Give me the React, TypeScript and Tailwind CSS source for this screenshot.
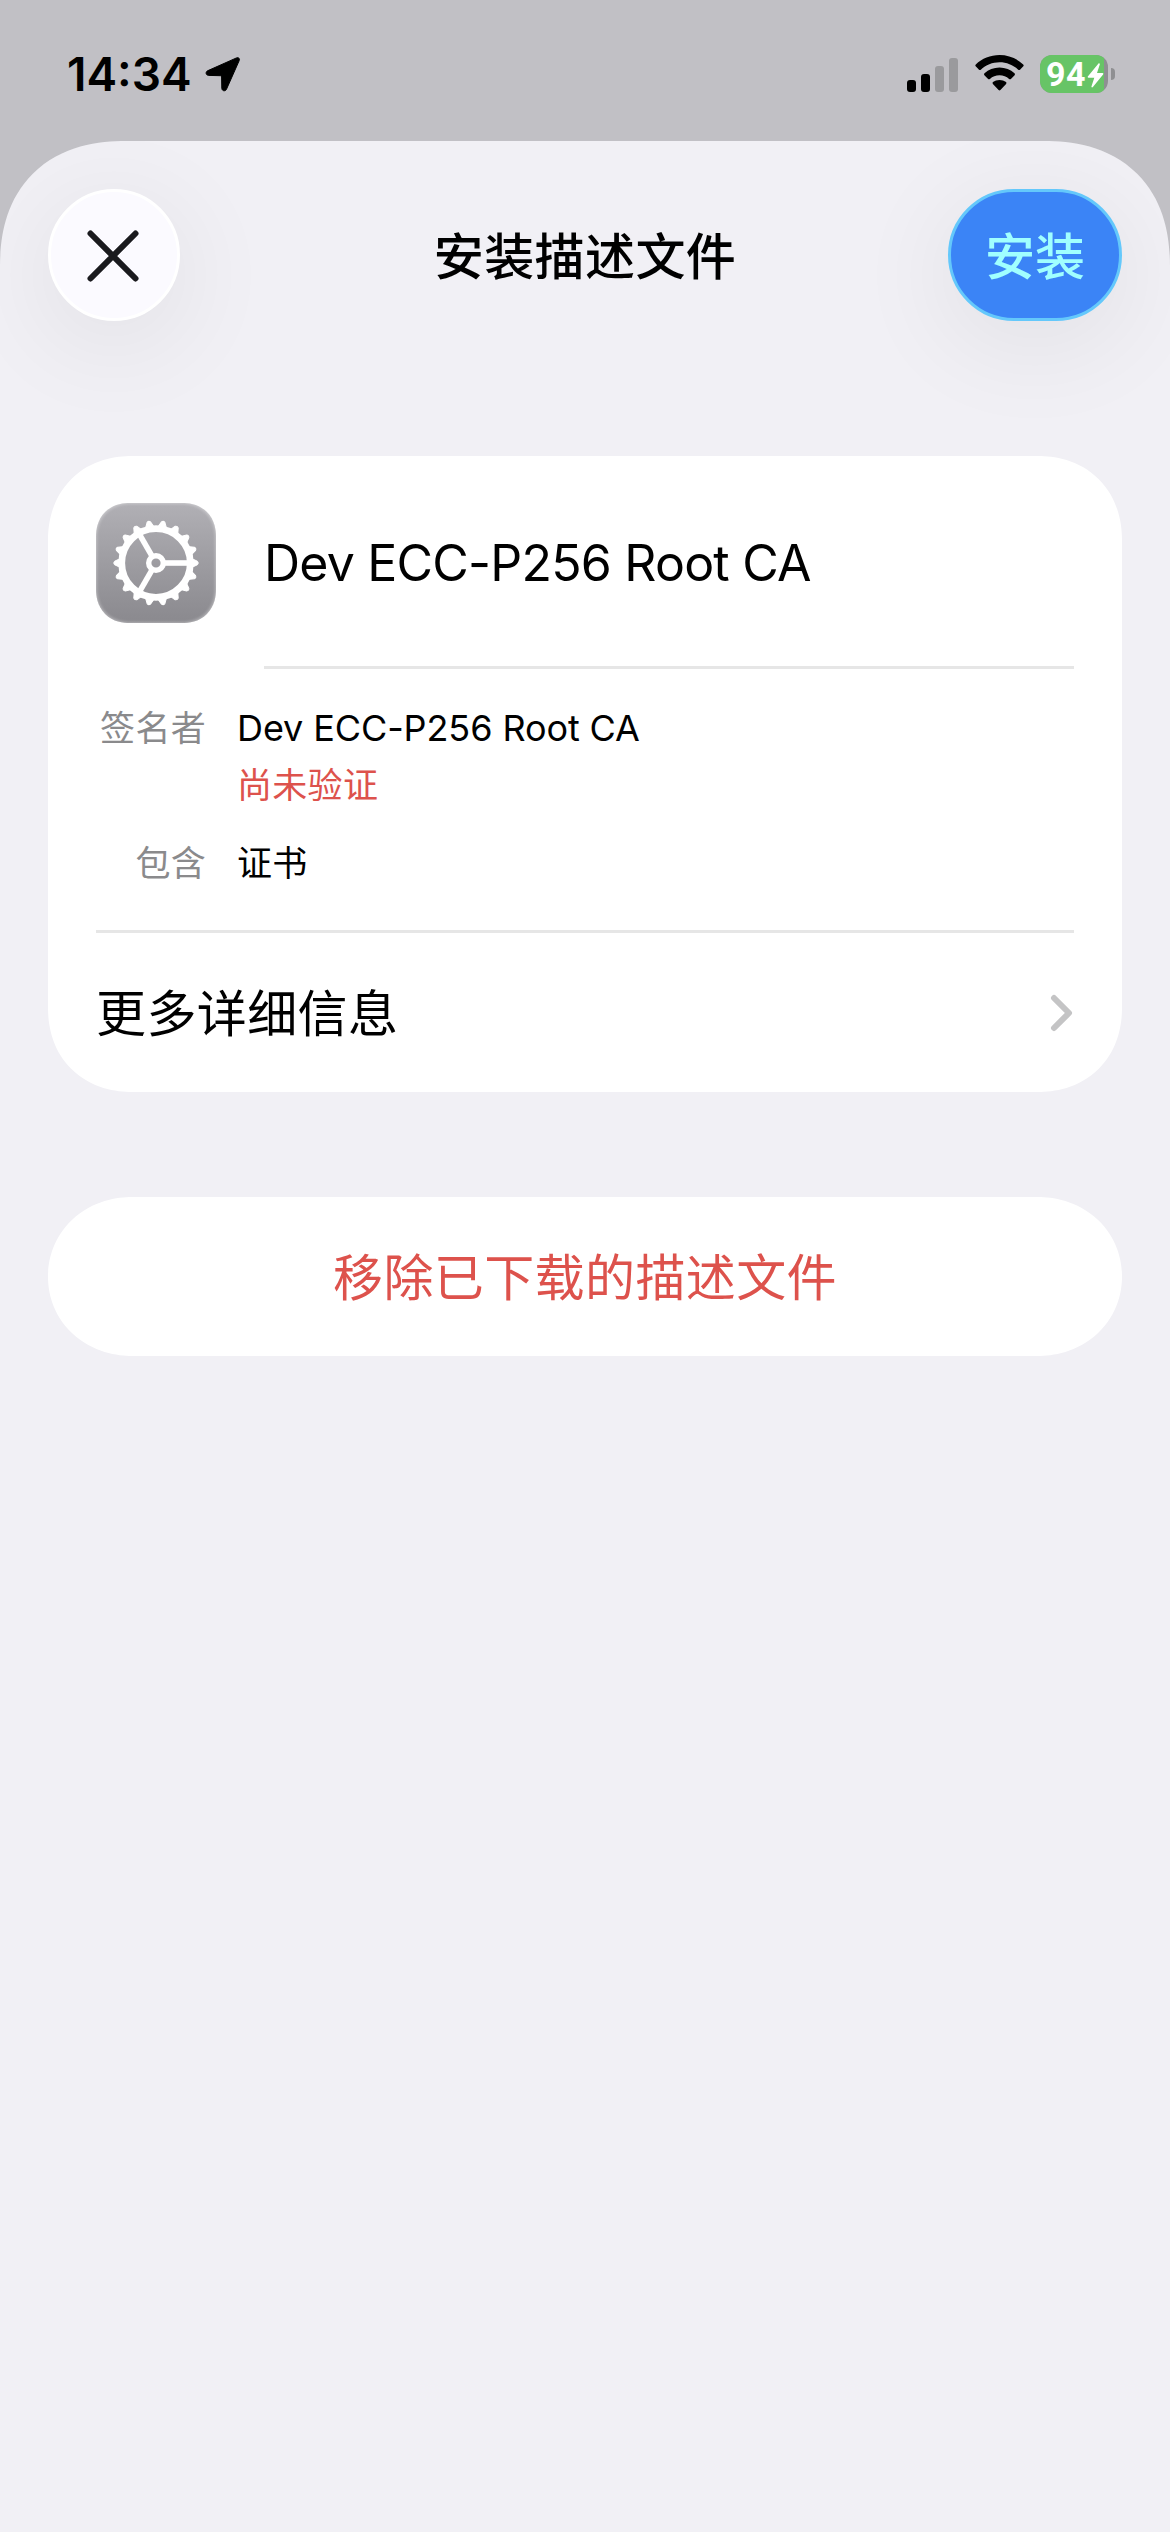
import type { ReactNode } from "react";

const TEETH = Array.from({ length: 18 }, (_, i) => i * 20);
const SPOKES = [0, 120, 240];

function StatusBar() {
    return (
        <div className="h-[141px] pl-[67px] pr-[55px] pt-[46px] flex items-start justify-between text-black">
            <div className="flex items-center h-[56px]">
                <span className="text-[46px] leading-[56px] font-semibold">14:34</span>
                <svg className="ml-[13px] w-[36px] h-[36px]" viewBox="0 0 36 36">
                    <path
                        d="M3 14.6 31.5 1.9c2-.9 3.6.7 2.7 2.7L21.5 33.2c-1.1 2.4-4.6 2-4.7-.9l-.2-11.4c0-.8-.4-1.2-1.2-1.2L3.600 19.400c-3-.1-3.400-3.700-.6-4.800z"
                        fill="currentColor"
                        stroke="currentColor"
                        strokeWidth="1"
                    />
                </svg>
            </div>

            <div className="flex items-center mt-[9px] h-[38px]">
                {/* Cellular */}
                <div className="flex items-end gap-[5px] h-[34px] mt-[2px]">
                    <div className="w-[9px] h-[12px] rounded-[3px] bg-black" />
                    <div className="w-[9px] h-[18px] rounded-[3px] bg-black" />
                    <div className="w-[9px] h-[26px] rounded-[3px] bg-[#9a9a9d]" />
                    <div className="w-[9px] h-[34px] rounded-[3px] bg-[#9a9a9d]" />
                </div>
                {/* Wifi */}
                <svg className="ml-[17px] mr-[16px] w-[49px] h-[36px] -mt-[2px]" viewBox="0 0 49 36" fill="currentColor">
                    <path d="M24.500 0C33.600 0 42 3.500 48.200 9.400c.6.600.6 1.300.1 1.900L45 14.700c-.5.500-1.200.5-1.800 0-5-4.700-11.600-7.400-18.700-7.400S10.800 10 5.800 14.700c-.6.500-1.300.5-1.800 0L.7 11.300c-.5-.6-.5-1.300.1-1.900C7 3.500 15.400 0 24.500 0z" />
                    <path d="M24.500 12.500c5.800 0 11 2.200 15 5.800.6.600.6 1.300.1 1.900l-3.700 3.700c-.5.500-1.200.5-1.800 0-2.600-2.300-5.900-3.600-9.600-3.600s-7 1.300-9.600 3.600c-.6.500-1.300.5-1.800 0l-3.700-3.700c-.5-.6-.5-1.300.1-1.900 4-3.600 9.200-5.800 15-5.800z" />
                    <path d="M24.500 24.900c2.500 0 4.700.8 6.500 2.200.6.500.6 1.200.1 1.800l-5.700 6.200c-.5.600-1.300.6-1.800 0l-5.700-6.200c-.5-.6-.5-1.300.1-1.800 1.800-1.400 4-2.200 6.500-2.200z" />
                </svg>
                {/* Battery */}
                <div className="relative w-[68px] h-[38px] rounded-[12px] overflow-hidden bg-[#8f8f92]">
                    <div className="flex items-center w-[64px] h-[38px] bg-[#67c466] pl-[6px] text-white">
                        <span className="text-[34px] leading-[38px] font-bold font-[Roboto,sans-serif] tracking-[0.5px]">94</span>
                    </div>
                    <svg className="absolute left-[47px] top-[8px] w-[17px] h-[25px]" viewBox="0 0 17 25">
                        <path
                            d="M11.300.7 1 13.300c-.6.700-.2 1.400.6 1.400h5.700L4.500 23.300c-.3 1.100.7 1.500 1.400.7L16.100 11.400c.6-.7.2-1.400-.6-1.400H10l2.800-8.500c.3-1.100-.8-1.600-1.500-.8z"
                            fill="#fff"
                        />
                    </svg>
                </div>
                <div className="ml-[3px] w-[4px] h-[12px] rounded-r-full bg-[#8f8f92]" />
            </div>
        </div>
    );
}

function GearIcon() {
    return (
        <div className="w-[120px] h-[120px] rounded-[34px] [corner-shape:superellipse(1.15)] bg-linear-to-b from-[#b1b0b5] to-[#8a898e] shadow-[inset_0_0_3px_1px_rgba(255,255,255,0.35)]">
            <svg className="w-[120px] h-[120px]" viewBox="-60 -60 120 120" stroke="#fff" fill="none">
                {TEETH.map((deg) => (
                    <path
                        key={deg}
                        d="M35 -4.800 L41.500 -1.700 Q43 0 41.500 1.700 L35 4.800Z"
                        transform={`rotate(${deg})`}
                        fill="#fff"
                        strokeWidth="1"
                        strokeLinejoin="round"
                    />
                ))}
                <circle r="34.300" strokeWidth="6.800" />
                <circle r="7.300" strokeWidth="5.400" />
                {SPOKES.map((deg) => (
                    <path key={deg} d="M8.500 0H33" transform={`rotate(${deg})`} strokeWidth="5.600" />
                ))}
            </svg>
        </div>
    );
}

function NavBar() {
    return (
        <div className="flex items-center justify-between px-12 pt-12">
            <div className="w-[174px]">
                <button className="flex items-center justify-center w-[132px] h-[132px] rounded-full bg-[#fbfaff] border-[3px] border-white shadow-[0_20px_100px_10px_rgba(0,0,0,0.06)]">
                    <svg className="w-[52px] h-[52px] -ml-[2px] mt-[2px]" viewBox="0 0 52 52">
                        <path d="M3.500 3.500l45 45M48.500 3.500l-45 45" stroke="#1a1a1e" strokeWidth="6" strokeLinecap="round" />
                    </svg>
                </button>
            </div>
            <h1 className="pt-[3px] text-[50px] leading-[60px] font-medium tracking-[0.4px] text-black">安装描述文件</h1>
            <button className="w-[174px] h-[132px] pt-[3px] rounded-full bg-[#3b84f6] border-[3px] border-[#64c8fb] text-[#a0ffff] text-[50px] font-medium leading-[60px] shadow-[0_20px_100px_10px_rgba(0,0,0,0.06)]">
                安装
            </button>
        </div>
    );
}

function InfoRow({ label, children }: { label: string; children: ReactNode }) {
    return (
        <div className="flex gap-[31px] text-[35px] leading-[57px] tracking-[0.3px]">
            <div className="w-[110px] text-right whitespace-nowrap text-[#8a8a8c]">{label}</div>
            <div className="text-black">{children}</div>
        </div>
    );
}

export default function App() {
    return (
        <div className="w-[1170px] h-[2532px] overflow-hidden bg-[#c1c0c5] font-[Inter,'Noto_Sans_CJK_SC',sans-serif]">
            <StatusBar />
            <div className="h-[2391px] overflow-hidden bg-[#f1f0f5] rounded-t-[126px] [corner-shape:superellipse(1.2)]">
                <NavBar />

                <div className="mt-[135px] mx-12 h-[636px] px-12 bg-white rounded-[84px] [corner-shape:superellipse(1.1)]">
                    <div className="flex pt-[47px]">
                        <GearIcon />
                        <div className="ml-12 flex-1 h-[166px] border-b-[3px] border-[#e6e6e6]">
                            <div className="text-[50px] leading-[120px] tracking-[-0.78px] text-black">Dev ECC-P256 Root CA</div>
                        </div>
                    </div>

                    <div className="h-[264px] pt-[31px] border-b-[3px] border-[#e6e6e6]">
                        <InfoRow label="签名者">
                            <div className="text-[36px] tracking-[-0.1px]">Dev ECC-P256 Root CA</div>
                            <div className="text-[#dd524c]">尚未验证</div>
                        </InfoRow>
                        <div className="mt-[21px]">
                            <InfoRow label="包含">证书</InfoRow>
                        </div>
                    </div>

                    <div className="flex items-center justify-between h-[159px] text-[50px] tracking-[0.4px] text-black">
                        <span className="pt-[4px]">更多详细信息</span>
                        <svg className="w-[24px] h-[38px]" viewBox="0 0 24 38">
                            <path
                                d="M4 4l15 15L4 34"
                                fill="none"
                                stroke="#c4c4c5"
                                strokeWidth="6"
                                strokeLinecap="round"
                                strokeLinejoin="round"
                            />
                        </svg>
                    </div>
                </div>

                <button className="block mt-[105px] mx-12 w-[1074px] h-[159px] pt-[3px] bg-white rounded-[84px/79px] [corner-shape:superellipse(1.03)] text-[50px] tracking-[0.4px] text-[#dd524c]">
                    移除已下载的描述文件
                </button>
            </div>
        </div>
    );
}
